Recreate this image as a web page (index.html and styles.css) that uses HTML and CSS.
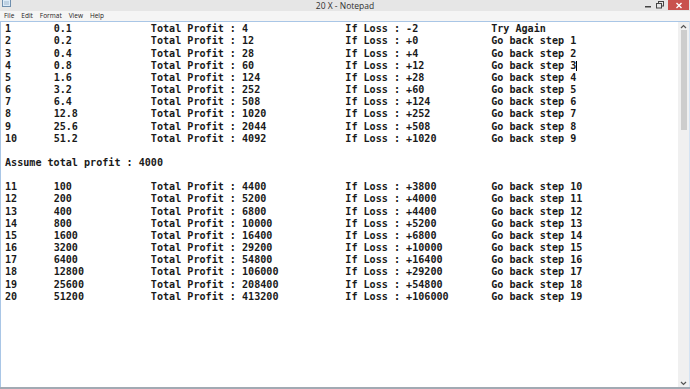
FILE: index.html
```html
<!DOCTYPE html>
<html lang="en">
<head>
<meta charset="utf-8">
<title>20 X - Notepad</title>
<link rel="stylesheet" href="styles.css">
</head>
<body>
<div class="window">
  <div class="titlebar">
    <div class="title-left">
      <svg class="app-icon" width="9" height="7" viewBox="0 0 9 7"><rect x="0.5" y="-1" width="8" height="7.5" fill="#dcebf8" stroke="#6f8fae"/><line x1="2" y1="2" x2="7" y2="2" stroke="#9fb6cc"/><line x1="2" y1="4" x2="7" y2="4" stroke="#9fb6cc"/></svg>
    </div>
    <div class="title">20 X - Notepad</div>
    <div class="controls">
      <svg class="ctl-min" width="12" height="10" viewBox="0 0 12 10"><rect x="3" y="6" width="6" height="1.5" fill="#444"/></svg>
      <svg class="ctl-max" width="12" height="10" viewBox="0 0 12 10"><rect x="4.5" y="1.5" width="5" height="4.5" fill="none" stroke="#444"/><rect x="2.5" y="3.5" width="5" height="4.5" fill="#e6e6e6" stroke="#444"/></svg>
      <div class="ctl-close"><svg width="8" height="7" viewBox="0 0 8 7"><path d="M1.5 1 L6.5 6 M6.5 1 L1.5 6" stroke="#fff" stroke-width="1.4"/></svg></div>
    </div>
  </div>
  <div class="menubar"><span>File</span><span>Edit</span><span>Format</span><span>View</span><span>Help</span></div>
  <div class="client">
<pre class="text">1&#9;0.1&#9;&#9;Total Profit : 4&#9;&#9;If Loss : -2&#9;&#9;Try Again
2&#9;0.2&#9;&#9;Total Profit : 12&#9;&#9;If Loss : +0&#9;&#9;Go back step 1
3&#9;0.4&#9;&#9;Total Profit : 28&#9;&#9;If Loss : +4&#9;&#9;Go back step 2
4&#9;0.8&#9;&#9;Total Profit : 60&#9;&#9;If Loss : +12&#9;&#9;Go back step 3<span class="caret"></span>
5&#9;1.6&#9;&#9;Total Profit : 124&#9;&#9;If Loss : +28&#9;&#9;Go back step 4
6&#9;3.2&#9;&#9;Total Profit : 252&#9;&#9;If Loss : +60&#9;&#9;Go back step 5
7&#9;6.4&#9;&#9;Total Profit : 508&#9;&#9;If Loss : +124&#9;&#9;Go back step 6
8&#9;12.8&#9;&#9;Total Profit : 1020&#9;&#9;If Loss : +252&#9;&#9;Go back step 7
9&#9;25.6&#9;&#9;Total Profit : 2044&#9;&#9;If Loss : +508&#9;&#9;Go back step 8
10&#9;51.2&#9;&#9;Total Profit : 4092&#9;&#9;If Loss : +1020&#9;&#9;Go back step 9

Assume total profit : 4000

11&#9;100&#9;&#9;Total Profit : 4400&#9;&#9;If Loss : +3800&#9;&#9;Go back step 10
12&#9;200&#9;&#9;Total Profit : 5200&#9;&#9;If Loss : +4000&#9;&#9;Go back step 11
13&#9;400&#9;&#9;Total Profit : 6800&#9;&#9;If Loss : +4400&#9;&#9;Go back step 12
14&#9;800&#9;&#9;Total Profit : 10000&#9;&#9;If Loss : +5200&#9;&#9;Go back step 13
15&#9;1600&#9;&#9;Total Profit : 16400&#9;&#9;If Loss : +6800&#9;&#9;Go back step 14
16&#9;3200&#9;&#9;Total Profit : 29200&#9;&#9;If Loss : +10000&#9;Go back step 15
17&#9;6400&#9;&#9;Total Profit : 54800&#9;&#9;If Loss : +16400&#9;Go back step 16
18&#9;12800&#9;&#9;Total Profit : 106000&#9;&#9;If Loss : +29200&#9;Go back step 17
19&#9;25600&#9;&#9;Total Profit : 208400&#9;&#9;If Loss : +54800&#9;Go back step 18
20&#9;51200&#9;&#9;Total Profit : 413200&#9;&#9;If Loss : +106000&#9;Go back step 19
</pre>
    <div class="scrollbar">
      <div class="arrow"><svg width="7" height="5" viewBox="0 0 7 5"><path d="M1 4 L3.5 1.5 L6 4" fill="none" stroke="#555" stroke-width="1.2"/></svg></div>
      <div class="track"><div class="thumb"></div></div>
      <div class="arrow"><svg width="7" height="5" viewBox="0 0 7 5"><path d="M1 1 L3.5 3.5 L6 1" fill="none" stroke="#555" stroke-width="1.2"/></svg></div>
    </div>
  </div>
</div>
</body>
</html>
```
FILE: styles.css
```css
* { box-sizing: border-box; margin: 0; padding: 0; }
html, body { width: 690px; height: 389px; overflow: hidden; background: #fff; }
body { font-family: "Open Sans", "Noto Sans", sans-serif; }

.window {
  display: flex;
  flex-direction: column;
  width: 690px;
  height: 389px;
  border-bottom: 2px solid #a2aab3;
}

.titlebar {
  height: 11px;
  background: #e6e6e6;
  display: grid;
  grid-template-columns: 1fr auto 1fr;
  align-items: start;
}
.title-left { display: flex; padding-left: 2px; }
.app-icon { display: block; }
.title {
  font-size: 8.5px;
  line-height: 10px;
  color: #303030;
  padding-top: 0.5px;
}
.controls {
  justify-self: end;
  display: flex;
  align-items: flex-start;
  margin-right: 1px;
}
.ctl-min, .ctl-max { display: block; }
.ctl-close {
  width: 21px;
  height: 10px;
  margin-left: 2px;
  background: #c9524d;
  display: flex;
  align-items: center;
  justify-content: center;
}
.ctl-close svg { display: block; }

.menubar {
  height: 10px;
  background: #f5f5f5;
  display: flex;
  gap: 7px;
  padding-left: 4px;
  font-size: 6.5px;
  line-height: 10px;
  color: #222;
}

.client {
  flex: 1;
  min-height: 0;
  display: flex;
  border-top: 1px solid #a9c6e6;
  border-left: 1px solid #a9c6e6;
  border-right: 1px solid #d4e3f3;
}

.text {
  flex: 1;
  overflow: hidden;
  font-family: "DejaVu Sans Mono", "Liberation Mono", monospace;
  font-weight: bold;
  font-size: 10.1px;
  line-height: 12.15px;
  tab-size: 8;
  -moz-tab-size: 8;
  white-space: pre;
  color: #1a1a1a;
  padding: 1.3px 0 0 4px;
}
.caret {
  display: inline-block;
  width: 0;
  height: 10px;
  border-left: 1px solid #000;
  vertical-align: -2px;
}

.scrollbar {
  width: 11px;
  background: #f0f0f0;
  display: flex;
  flex-direction: column;
}
.arrow {
  height: 8px;
  display: flex;
  align-items: center;
  justify-content: center;
}
.arrow svg { display: block; }
.track {
  flex: 1;
  padding: 0 2px 0 3px;
}
.thumb {
  height: 100px;
  background: #cdcdcd;
}
```
